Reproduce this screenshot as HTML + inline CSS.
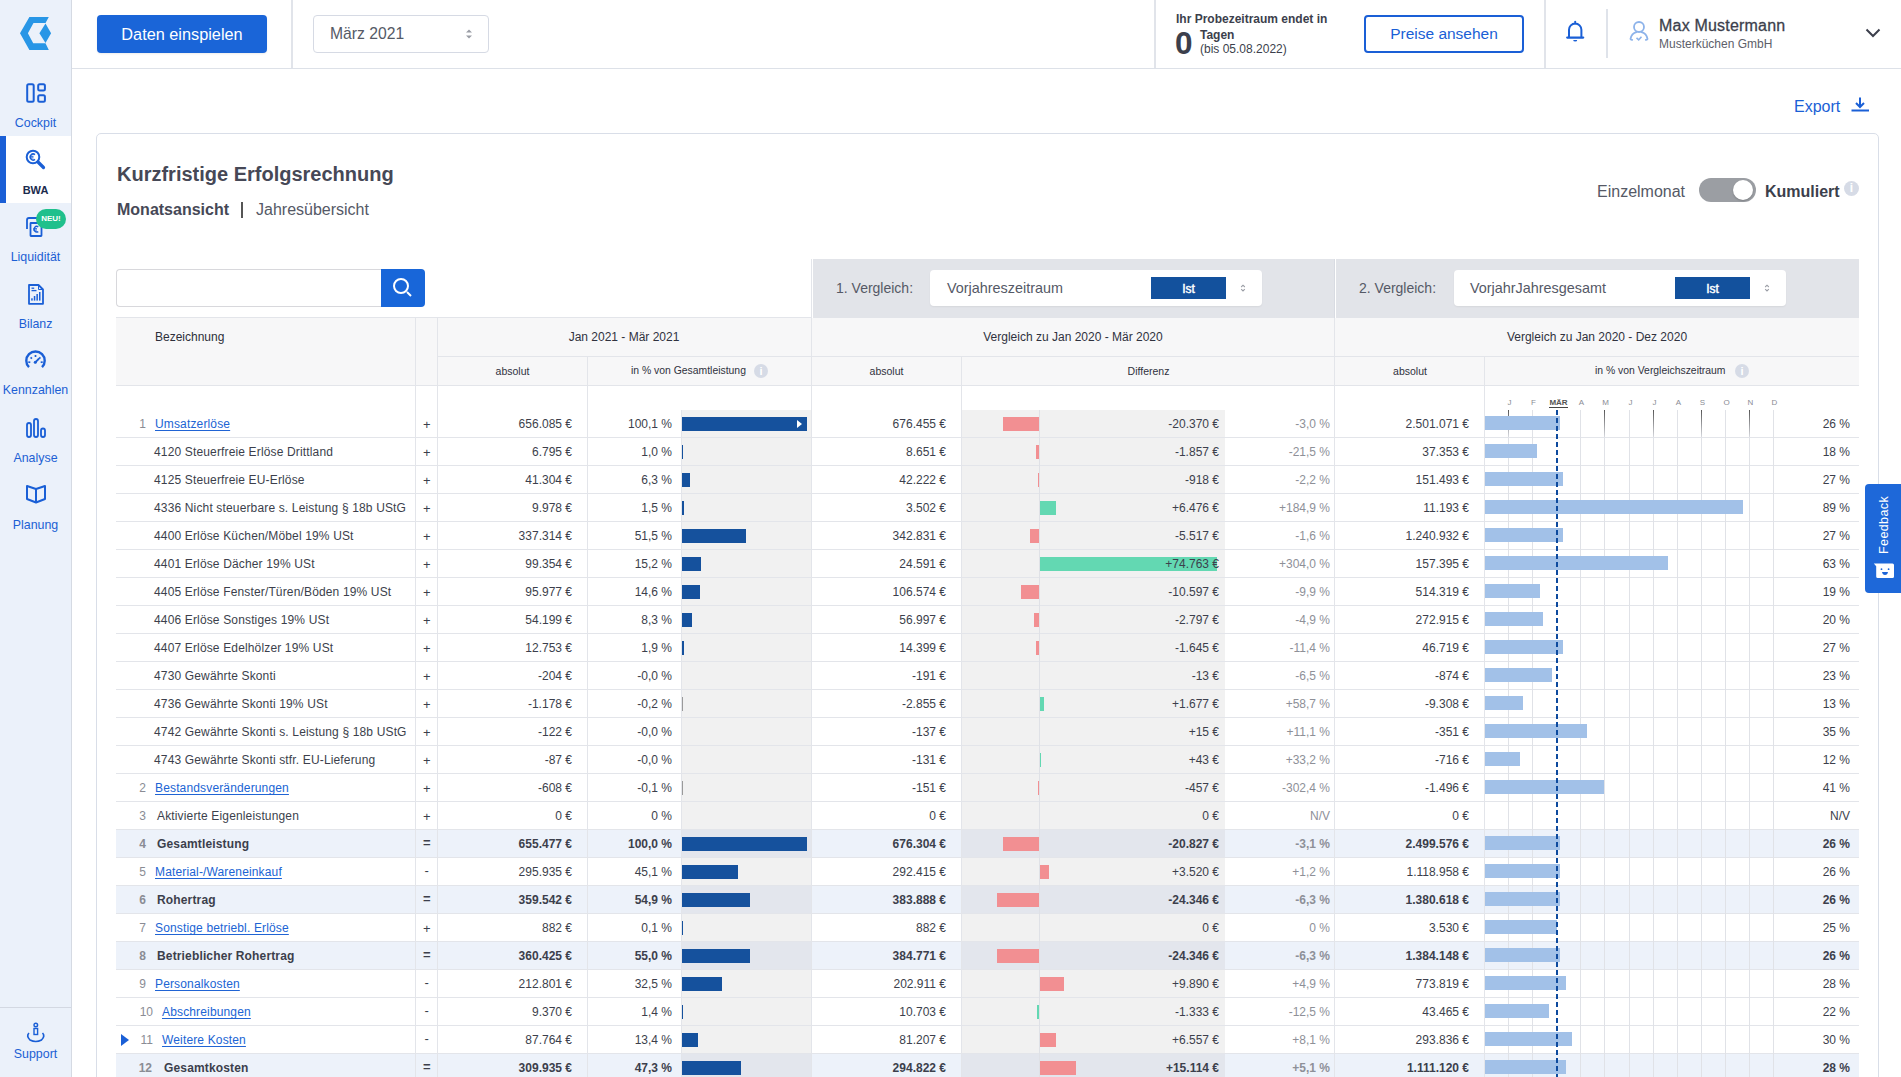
<!DOCTYPE html>
<html><head><meta charset="utf-8">
<style>
*{box-sizing:border-box;margin:0;padding:0}
html,body{width:1901px;height:1077px;overflow:hidden;background:#fff;font-family:"Liberation Sans",sans-serif;color:#3c3f4c}
div{position:absolute}
.a{position:absolute}
.t{position:absolute;height:28px;line-height:29px;font-size:12px;white-space:nowrap;color:#3c3f4c}
.lb{letter-spacing:0.15px}
.r{text-align:right}
.num{text-align:right;color:#8a8c94}
.lnk{color:#2064d4;text-decoration:underline;text-underline-offset:1.5px}
.sg{text-align:center;font-size:13px;line-height:26px !important;padding-left:1.5px}
.dp{color:#8e9098}
.mlab{font-size:8px;text-align:center;color:#8a8c94;height:10px;line-height:10px}
.side{position:absolute;left:0;width:71px;text-align:center;font-size:12.4px;color:#1c5fd4}
.hdr{position:absolute;font-size:12px;color:#30323e;white-space:nowrap}
</style></head><body>
<!-- SIDEBAR -->
<div class="a" style="left:0;top:0;width:72px;height:1077px;background:#ebf1fa;border-right:1px solid #d5dae3"></div>
<svg class="a" style="position:absolute;left:0;top:0" width="71" height="60" viewBox="0 0 71 60">
<polygon fill="#2896e6" points="29.4,17 48.8,17 45.5,22.9 33.5,22.9 27.9,33.3 33.2,43.3 45.5,43.3 48.8,49.9 29.4,49.9 20,33.3"/>
<polygon fill="#2896e6" points="45.5,23.6 51.1,33.3 45.5,43 39.4,33.3"/>
</svg>
<!-- cockpit -->
<svg class="a" style="position:absolute;left:0;top:69px" width="71" height="40" viewBox="0 69 71 40">
<rect x="27.2" y="84.2" width="6.5" height="17.6" rx="1.5" fill="none" stroke="#1a5fd6" stroke-width="2"/>
<rect x="38.2" y="84.2" width="6.7" height="6.4" rx="1.5" fill="none" stroke="#1a5fd6" stroke-width="2"/>
<rect x="38.2" y="95.2" width="6.7" height="6.6" rx="1.5" fill="none" stroke="#1a5fd6" stroke-width="2"/>
</svg>
<div class="side" style="top:116px;height:14px;line-height:14px">Cockpit</div>
<!-- BWA active -->
<div class="a" style="left:0;top:136px;width:71px;height:67px;background:#fff"></div>
<div class="a" style="left:0;top:136px;width:6px;height:67px;background:#1a5fd6"></div>
<svg class="a" style="position:absolute;left:0;top:136px" width="71" height="67" viewBox="0 136 71 67">
<circle cx="33" cy="157" r="6.3" fill="none" stroke="#1a5fd6" stroke-width="2"/>
<path d="M38 162 L43.5 167.5" stroke="#1a5fd6" stroke-width="3.2" stroke-linecap="round"/>
<path d="M35 154.6 A3 3 0 1 0 35 159.4" fill="none" stroke="#1a5fd6" stroke-width="1.5"/>
<path d="M30 156.3 H33.5 M30 157.9 H33.5" stroke="#1a5fd6" stroke-width="1"/>
</svg>
<div class="side" style="top:183px;height:14px;line-height:14px;font-weight:700;font-size:11px;color:#1b2b4d">BWA</div>
<!-- Liquiditaet -->
<svg class="a" style="position:absolute;left:0;top:203px" width="71" height="40" viewBox="0 203 71 40">
<path d="M27 229 V220 Q27 218 29 218 H38" fill="none" stroke="#1a5fd6" stroke-width="1.8"/>
<rect x="30.5" y="223" width="11" height="13" rx="0.5" fill="#edf2fa" stroke="#1a5fd6" stroke-width="1.8"/>
<path d="M38.3 226.8 A2.8 2.8 0 1 0 38.3 231.6" fill="none" stroke="#1a5fd6" stroke-width="1.4"/>
<path d="M33.5 228.6 H37 M33.5 230 H37" stroke="#1a5fd6" stroke-width="0.9"/>
</svg>
<div class="a" style="left:36px;top:209px;width:30px;height:20px;border-radius:10px;background:#1fc08c;color:#fff;font-size:8px;font-weight:700;text-align:center;line-height:20px">NEU!</div>
<div class="side" style="top:250px;height:14px;line-height:14px">Liquidität</div>
<!-- Bilanz -->
<svg class="a" style="position:absolute;left:0;top:270px" width="71" height="40" viewBox="0 270 71 40">
<path d="M29 285 H38.5 L43 289.5 V303.8 H29 Z" fill="none" stroke="#1a5fd6" stroke-width="1.8" stroke-linejoin="round"/>
<path d="M38.5 286 V289.5 H42" fill="none" stroke="#1a5fd6" stroke-width="1"/>
<line x1="31.5" y1="288.2" x2="34.2" y2="288.2" stroke="#1a5fd6" stroke-width="1.3"/>
<line x1="31.5" y1="290.6" x2="36.5" y2="290.6" stroke="#1a5fd6" stroke-width="1.3"/>
<rect x="31.2" y="298.3" width="1.5" height="2.3" fill="#1a5fd6"/><rect x="33.8" y="296" width="1.5" height="4.6" fill="#1a5fd6"/><rect x="36.4" y="294" width="1.5" height="6.6" fill="#1a5fd6"/><rect x="39" y="292" width="1.5" height="8.6" fill="#1a5fd6"/>
</svg>
<div class="side" style="top:317px;height:14px;line-height:14px">Bilanz</div>
<!-- Kennzahlen -->
<svg class="a" style="position:absolute;left:0;top:337px" width="71" height="40" viewBox="0 337 71 40">
<path d="M29 367.2 A9.2 9.2 0 1 1 42 367.2" fill="none" stroke="#1a5fd6" stroke-width="2.4"/>
<line x1="35.5" y1="355" x2="35.5" y2="357" stroke="#1a5fd6" stroke-width="1.7"/>
<line x1="30.6" y1="357.3" x2="31.9" y2="358.6" stroke="#1a5fd6" stroke-width="1.7"/>
<line x1="40.4" y1="357.3" x2="39.1" y2="358.6" stroke="#1a5fd6" stroke-width="1.7"/>
<line x1="28.3" y1="362.2" x2="30.3" y2="362.2" stroke="#1a5fd6" stroke-width="1.7"/>
<line x1="42.7" y1="362.2" x2="40.7" y2="362.2" stroke="#1a5fd6" stroke-width="1.7"/>
<line x1="35.3" y1="362.3" x2="38.6" y2="359" stroke="#1a5fd6" stroke-width="1.8" stroke-linecap="round"/>
<circle cx="35.3" cy="362.3" r="1.5" fill="#1a5fd6"/>
</svg>
<div class="side" style="top:383px;height:14px;line-height:14px">Kennzahlen</div>
<!-- Analyse -->
<svg class="a" style="position:absolute;left:0;top:404px" width="71" height="40" viewBox="0 404 71 40">
<rect x="27" y="423" width="4" height="14" rx="2" fill="none" stroke="#1a5fd6" stroke-width="1.8"/>
<rect x="34" y="419" width="4" height="18" rx="2" fill="none" stroke="#1a5fd6" stroke-width="1.8"/>
<rect x="41" y="428.5" width="4" height="8.5" rx="2" fill="none" stroke="#1a5fd6" stroke-width="1.8"/>
</svg>
<div class="side" style="top:451px;height:14px;line-height:14px">Analyse</div>
<!-- Planung -->
<svg class="a" style="position:absolute;left:0;top:471px" width="71" height="40" viewBox="0 471 71 40">
<path d="M27 486 L36 489 L45 486 V499 L36 502.5 L27 499 Z" fill="none" stroke="#1a5fd6" stroke-width="2" stroke-linejoin="round"/>
<line x1="36" y1="489" x2="36" y2="502" stroke="#1a5fd6" stroke-width="2"/>
</svg>
<div class="side" style="top:518px;height:14px;line-height:14px">Planung</div>
<!-- Support -->
<div class="a" style="left:0;top:1007px;width:71px;height:1px;background:#d3d8e2"></div>
<svg class="a" style="position:absolute;left:0;top:1010px" width="71" height="36" viewBox="0 1010 71 36">
<circle cx="35.8" cy="1025" r="1.8" fill="none" stroke="#1a5fd6" stroke-width="1.4"/>
<rect x="34" y="1028.5" width="3.6" height="6" fill="none" stroke="#1a5fd6" stroke-width="1.4"/>
<path d="M29 1033 Q26 1036 30 1040 Q35.8 1043 41.5 1040 Q45.5 1036 42.5 1033" fill="none" stroke="#1a5fd6" stroke-width="1.6"/>
</svg>
<div class="side" style="top:1047px;height:14px;line-height:14px">Support</div>

<!-- HEADER -->
<div class="a" style="left:72px;top:68px;width:1829px;height:1px;background:#dde1e8"></div>
<div class="a" style="left:97px;top:15px;width:170px;height:38px;background:#1a65d8;border-radius:4px;color:#fff;font-size:16.3px;text-align:center;line-height:39px;box-shadow:0 1px 2px rgba(0,0,0,.08)">Daten einspielen</div>
<div class="a" style="left:291px;top:0;width:2px;height:68px;background:#e1e4ea"></div>
<div class="a" style="left:313px;top:15px;width:176px;height:38px;border:1px solid #d6dae4;border-radius:4px"></div>
<div class="hdr" style="left:330px;top:24px;font-size:15.7px;color:#555a66;line-height:20px">März 2021</div>
<svg class="a" style="position:absolute;left:463px;top:27px" width="12" height="14" viewBox="0 0 12 14"><path d="M3 5.5 L6 2.5 L9 5.5 Z M3 8.5 L6 11.5 L9 8.5 Z" fill="#9a9da5"/></svg>
<div class="a" style="left:1154px;top:0;width:2px;height:68px;background:#e1e4ea"></div>
<div class="hdr" style="left:1176px;top:11.5px;font-weight:700;font-size:12px;line-height:15px;color:#3c3f4c">Ihr Probezeitraum endet in</div>
<div class="hdr" style="left:1175px;top:24.5px;font-weight:700;font-size:31.5px;line-height:36px;color:#3c3f4c">0</div>
<div class="hdr" style="left:1200px;top:28px;font-weight:700;font-size:12px;line-height:15px;color:#3c3f4c">Tagen</div>
<div class="hdr" style="left:1200px;top:41.5px;font-size:12px;line-height:15px;color:#3c3f4c">(bis 05.08.2022)</div>
<div class="a" style="left:1364px;top:15px;width:160px;height:38px;border:2px solid #1a5fd6;border-radius:4px;color:#1a5fd6;font-size:15.5px;text-align:center;line-height:34px">Preise ansehen</div>
<div class="a" style="left:1544px;top:0;width:2px;height:68px;background:#e1e4ea"></div>
<svg class="a" style="position:absolute;left:1563px;top:19px" width="26" height="28" viewBox="0 0 26 28">
<path d="M6 18.5 V10.8 A6.2 6.2 0 0 1 18.4 10.8 V18.5" fill="none" stroke="#1a5fd6" stroke-width="2"/>
<path d="M4.2 18.6 H20.2" stroke="#1a5fd6" stroke-width="2.2" stroke-linecap="round"/>
<path d="M10.2 21 H14.2 A2 1.6 0 0 1 10.2 21 Z" fill="#1a5fd6"/>
<path d="M12.2 2.6 V4.6" stroke="#1a5fd6" stroke-width="1.8" stroke-linecap="round"/>
</svg>
<div class="a" style="left:1606px;top:9px;width:2px;height:49px;background:#dfe3ea"></div>
<svg class="a" style="position:absolute;left:1626px;top:19px" width="26" height="26" viewBox="0 0 26 26">
<circle cx="13" cy="8" r="5" fill="none" stroke="#8db3ea" stroke-width="1.8"/>
<path d="M6.2 20.8 Q4.8 21 4.5 20 Q5.5 14.5 10.5 13.2 M15.5 13.2 Q20.5 14.5 21.5 20 Q21.2 21 19.8 20.8" fill="none" stroke="#8db3ea" stroke-width="1.8" stroke-linecap="round"/>
<path d="M10.5 18.8 l2.2 2 l2.8 -3" fill="none" stroke="#8db3ea" stroke-width="1.6"/>
</svg>
<div class="hdr" style="left:1659px;top:16px;font-size:16px;line-height:20px;color:#3c3f4c;letter-spacing:0.2px;-webkit-text-stroke:0.3px #3c3f4c">Max Mustermann</div>
<div class="hdr" style="left:1659px;top:37px;font-size:12px;line-height:15px;color:#5d6069">Musterküchen GmbH</div>
<svg class="a" style="position:absolute;left:1864px;top:26px" width="18" height="14" viewBox="0 0 18 14"><path d="M2.5 3.5 L9 10 L15.5 3.5" fill="none" stroke="#3c3f4c" stroke-width="2"/></svg>

<!-- EXPORT -->
<div class="hdr" style="left:1794px;top:96.5px;font-size:16px;line-height:20px;color:#1a5fd6">Export</div>
<svg class="a" style="position:absolute;left:1849px;top:95px" width="22" height="18" viewBox="0 0 22 18">
<path d="M11 2.5 v9 M7 8 l4 4 l4 -4" fill="none" stroke="#1a5fd6" stroke-width="2"/>
<path d="M2.5 15.5 h17.5" stroke="#1a5fd6" stroke-width="2"/>
</svg>

<!-- CARD -->
<div class="a" style="left:96px;top:133px;width:1783px;height:1000px;border:1px solid #d9dee8;border-radius:5px"></div>
<div class="hdr" style="left:117px;top:161px;font-size:20px;font-weight:700;line-height:26px;color:#464856">Kurzfristige Erfolgsrechnung</div>
<div class="hdr" style="left:117px;top:200px;font-size:16px;font-weight:700;line-height:20px;color:#464856">Monatsansicht</div>
<div class="a" style="left:241px;top:202px;width:2px;height:16px;background:#555"></div>
<div class="hdr" style="left:256px;top:200px;font-size:16px;line-height:20px;color:#555966">Jahresübersicht</div>

<div class="hdr" style="left:1597px;top:181.5px;font-size:16px;line-height:20px;color:#555966">Einzelmonat</div>
<div class="a" style="left:1699px;top:178px;width:57px;height:24px;border-radius:12px;background:#9b9ea3"></div>
<div class="a" style="left:1733px;top:180px;width:20px;height:20px;border-radius:10px;background:#fff;box-shadow:0 1px 2px rgba(0,0,0,.2)"></div>
<div class="hdr" style="left:1765px;top:181.5px;font-size:16px;font-weight:700;line-height:20px;color:#3c3f4c">Kumuliert</div>
<div class="a" style="left:1844px;top:181px;width:15px;height:15px;border-radius:8px;background:#d6dbe6;color:#fff;font-size:12px;font-weight:700;text-align:center;line-height:15px">i</div>

<!-- SEARCH -->
<div class="a" style="left:116px;top:269px;width:266px;height:38px;border:1px solid #d8d8dc;border-right:none;border-radius:4px 0 0 4px"></div>
<div class="a" style="left:381px;top:269px;width:44px;height:38px;background:#1866d9;border-radius:0 4px 4px 0"></div>
<svg class="a" style="position:absolute;left:381px;top:269px" width="44" height="38" viewBox="0 0 44 38">
<circle cx="20" cy="17" r="7" fill="none" stroke="#fff" stroke-width="2"/>
<line x1="26" y1="23" x2="30" y2="27" stroke="#fff" stroke-width="2"/>
</svg>

<!-- VERGLEICH PANELS -->
<div class="a" style="left:813px;top:259px;width:522px;height:59px;background:#e2e4e9"></div>
<div class="a" style="left:1336px;top:259px;width:523px;height:59px;background:#e2e4e9"></div>
<div class="a" style="left:811px;top:259px;width:1px;height:59px;background:#e3e5ea"></div>
<div class="a" style="left:1334px;top:259px;width:1px;height:59px;background:#d8dbe2"></div>
<div class="hdr" style="left:836px;top:278px;font-size:14px;line-height:20px;color:#555966">1. Vergleich:</div>
<div class="a" style="left:930px;top:270px;width:332px;height:36px;background:#fff;border-radius:4px;box-shadow:0 1px 2px rgba(0,0,0,.06)"></div>
<div class="hdr" style="left:947px;top:278px;font-size:14.4px;line-height:20px;color:#555966">Vorjahreszeitraum</div>
<div class="a" style="left:1151px;top:277px;width:75px;height:22px;background:#13519d;color:#fff;font-size:12px;font-weight:400;-webkit-text-stroke:0.45px #fff;text-align:center;line-height:24px">Ist</div>
<svg class="a" style="position:absolute;left:1238px;top:281px" width="10" height="14" viewBox="0 0 10 14"><path d="M3.2 6 L5 4.2 L6.8 6 M3.2 8.2 L5 10 L6.8 8.2" fill="none" stroke="#9a9da5" stroke-width="1.1"/></svg>
<div class="hdr" style="left:1359px;top:278px;font-size:14px;line-height:20px;color:#555966">2. Vergleich:</div>
<div class="a" style="left:1454px;top:270px;width:332px;height:36px;background:#fff;border-radius:4px;box-shadow:0 1px 2px rgba(0,0,0,.06)"></div>
<div class="hdr" style="left:1470px;top:278px;font-size:14.4px;line-height:20px;color:#555966">VorjahrJahresgesamt</div>
<div class="a" style="left:1675px;top:277px;width:75px;height:22px;background:#13519d;color:#fff;font-size:12px;font-weight:400;-webkit-text-stroke:0.45px #fff;text-align:center;line-height:24px">Ist</div>
<svg class="a" style="position:absolute;left:1762px;top:281px" width="10" height="14" viewBox="0 0 10 14"><path d="M3.2 6 L5 4.2 L6.8 6 M3.2 8.2 L5 10 L6.8 8.2" fill="none" stroke="#9a9da5" stroke-width="1.1"/></svg>

<!-- TABLE HEADER -->
<div class="a" style="left:116px;top:318px;width:1743px;height:68px;background:#f7f7f8"></div>
<div class="a" style="left:116px;top:317px;width:695px;height:1px;background:#e3e5ea"></div>
<div class="a" style="left:437px;top:356px;width:1422px;height:1px;background:#e3e5ea"></div>
<div class="a" style="left:116px;top:385px;width:1743px;height:1px;background:#e3e5ea"></div>
<div class="hdr" style="left:155px;top:329px;line-height:16px;color:#2d2f3a">Bezeichnung</div>
<div class="hdr" style="left:437px;top:329px;width:374px;text-align:center;line-height:16px">Jan 2021 - Mär 2021</div>
<div class="hdr" style="left:811px;top:329px;width:524px;text-align:center;line-height:16px">Vergleich zu Jan 2020 - Mär 2020</div>
<div class="hdr" style="left:1335px;top:329px;width:524px;text-align:center;line-height:16px">Vergleich zu Jan 2020 - Dez 2020</div>
<div class="hdr" style="left:437px;top:364px;width:151px;text-align:center;line-height:14px;font-size:10.5px">absolut</div>
<div class="hdr" style="left:631px;top:364px;line-height:14px;font-size:10.4px">in % von Gesamtleistung</div>
<div class="a" style="left:754px;top:364px;width:14px;height:14px;border-radius:7px;background:#d6dbe6;color:#fff;font-size:11px;font-weight:700;text-align:center;line-height:14px">i</div>
<div class="hdr" style="left:811px;top:364px;width:151px;text-align:center;line-height:14px;font-size:10.5px">absolut</div>
<div class="hdr" style="left:962px;top:364px;width:373px;text-align:center;line-height:14px;font-size:10.5px">Differenz</div>
<div class="hdr" style="left:1335px;top:364px;width:150px;text-align:center;line-height:14px;font-size:10.5px">absolut</div>
<div class="hdr" style="left:1595px;top:364px;line-height:14px;font-size:10.4px">in % von Vergleichszeitraum</div>
<div class="a" style="left:1735px;top:364px;width:14px;height:14px;border-radius:7px;background:#d6dbe6;color:#fff;font-size:11px;font-weight:700;text-align:center;line-height:14px">i</div>

<!-- TABLE BODY -->
<div class="a" style="left:681px;top:410px;width:130px;height:28px;background:#f1f1f1"></div>
<div class="a" style="left:962px;top:410px;width:263px;height:28px;background:#f1f1f1"></div>
<div class="a" style="left:116px;top:437px;width:1743px;height:1px;background:#e3e5ea"></div>
<div class="a" style="left:1039px;top:410px;width:1px;height:28px;background:#dfe1e6"></div>
<div class="a" style="left:681px;top:438px;width:130px;height:28px;background:#f1f1f1"></div>
<div class="a" style="left:962px;top:438px;width:263px;height:28px;background:#f1f1f1"></div>
<div class="a" style="left:116px;top:465px;width:1743px;height:1px;background:#e3e5ea"></div>
<div class="a" style="left:1039px;top:438px;width:1px;height:28px;background:#dfe1e6"></div>
<div class="a" style="left:681px;top:466px;width:130px;height:28px;background:#f1f1f1"></div>
<div class="a" style="left:962px;top:466px;width:263px;height:28px;background:#f1f1f1"></div>
<div class="a" style="left:116px;top:493px;width:1743px;height:1px;background:#e3e5ea"></div>
<div class="a" style="left:1039px;top:466px;width:1px;height:28px;background:#dfe1e6"></div>
<div class="a" style="left:681px;top:494px;width:130px;height:28px;background:#f1f1f1"></div>
<div class="a" style="left:962px;top:494px;width:263px;height:28px;background:#f1f1f1"></div>
<div class="a" style="left:116px;top:521px;width:1743px;height:1px;background:#e3e5ea"></div>
<div class="a" style="left:1039px;top:494px;width:1px;height:28px;background:#dfe1e6"></div>
<div class="a" style="left:681px;top:522px;width:130px;height:28px;background:#f1f1f1"></div>
<div class="a" style="left:962px;top:522px;width:263px;height:28px;background:#f1f1f1"></div>
<div class="a" style="left:116px;top:549px;width:1743px;height:1px;background:#e3e5ea"></div>
<div class="a" style="left:1039px;top:522px;width:1px;height:28px;background:#dfe1e6"></div>
<div class="a" style="left:681px;top:550px;width:130px;height:28px;background:#f1f1f1"></div>
<div class="a" style="left:962px;top:550px;width:263px;height:28px;background:#f1f1f1"></div>
<div class="a" style="left:116px;top:577px;width:1743px;height:1px;background:#e3e5ea"></div>
<div class="a" style="left:1039px;top:550px;width:1px;height:28px;background:#dfe1e6"></div>
<div class="a" style="left:681px;top:578px;width:130px;height:28px;background:#f1f1f1"></div>
<div class="a" style="left:962px;top:578px;width:263px;height:28px;background:#f1f1f1"></div>
<div class="a" style="left:116px;top:605px;width:1743px;height:1px;background:#e3e5ea"></div>
<div class="a" style="left:1039px;top:578px;width:1px;height:28px;background:#dfe1e6"></div>
<div class="a" style="left:681px;top:606px;width:130px;height:28px;background:#f1f1f1"></div>
<div class="a" style="left:962px;top:606px;width:263px;height:28px;background:#f1f1f1"></div>
<div class="a" style="left:116px;top:633px;width:1743px;height:1px;background:#e3e5ea"></div>
<div class="a" style="left:1039px;top:606px;width:1px;height:28px;background:#dfe1e6"></div>
<div class="a" style="left:681px;top:634px;width:130px;height:28px;background:#f1f1f1"></div>
<div class="a" style="left:962px;top:634px;width:263px;height:28px;background:#f1f1f1"></div>
<div class="a" style="left:116px;top:661px;width:1743px;height:1px;background:#e3e5ea"></div>
<div class="a" style="left:1039px;top:634px;width:1px;height:28px;background:#dfe1e6"></div>
<div class="a" style="left:681px;top:662px;width:130px;height:28px;background:#f1f1f1"></div>
<div class="a" style="left:962px;top:662px;width:263px;height:28px;background:#f1f1f1"></div>
<div class="a" style="left:116px;top:689px;width:1743px;height:1px;background:#e3e5ea"></div>
<div class="a" style="left:1039px;top:662px;width:1px;height:28px;background:#dfe1e6"></div>
<div class="a" style="left:681px;top:690px;width:130px;height:28px;background:#f1f1f1"></div>
<div class="a" style="left:962px;top:690px;width:263px;height:28px;background:#f1f1f1"></div>
<div class="a" style="left:116px;top:717px;width:1743px;height:1px;background:#e3e5ea"></div>
<div class="a" style="left:1039px;top:690px;width:1px;height:28px;background:#dfe1e6"></div>
<div class="a" style="left:681px;top:718px;width:130px;height:28px;background:#f1f1f1"></div>
<div class="a" style="left:962px;top:718px;width:263px;height:28px;background:#f1f1f1"></div>
<div class="a" style="left:116px;top:745px;width:1743px;height:1px;background:#e3e5ea"></div>
<div class="a" style="left:1039px;top:718px;width:1px;height:28px;background:#dfe1e6"></div>
<div class="a" style="left:681px;top:746px;width:130px;height:28px;background:#f1f1f1"></div>
<div class="a" style="left:962px;top:746px;width:263px;height:28px;background:#f1f1f1"></div>
<div class="a" style="left:116px;top:773px;width:1743px;height:1px;background:#e3e5ea"></div>
<div class="a" style="left:1039px;top:746px;width:1px;height:28px;background:#dfe1e6"></div>
<div class="a" style="left:681px;top:774px;width:130px;height:28px;background:#f1f1f1"></div>
<div class="a" style="left:962px;top:774px;width:263px;height:28px;background:#f1f1f1"></div>
<div class="a" style="left:116px;top:801px;width:1743px;height:1px;background:#e3e5ea"></div>
<div class="a" style="left:1039px;top:774px;width:1px;height:28px;background:#dfe1e6"></div>
<div class="a" style="left:681px;top:802px;width:130px;height:28px;background:#f1f1f1"></div>
<div class="a" style="left:962px;top:802px;width:263px;height:28px;background:#f1f1f1"></div>
<div class="a" style="left:116px;top:829px;width:1743px;height:1px;background:#e3e5ea"></div>
<div class="a" style="left:1039px;top:802px;width:1px;height:28px;background:#dfe1e6"></div>
<div class="a" style="left:116px;top:830px;width:1743px;height:28px;background:#edf2fa"></div>
<div class="a" style="left:681px;top:830px;width:130px;height:28px;background:#e3e6ed"></div>
<div class="a" style="left:962px;top:830px;width:263px;height:28px;background:#e3e6ed"></div>
<div class="a" style="left:116px;top:857px;width:1743px;height:1px;background:#e3e5ea"></div>
<div class="a" style="left:1039px;top:830px;width:1px;height:28px;background:#dfe1e6"></div>
<div class="a" style="left:681px;top:858px;width:130px;height:28px;background:#f1f1f1"></div>
<div class="a" style="left:962px;top:858px;width:263px;height:28px;background:#f1f1f1"></div>
<div class="a" style="left:116px;top:885px;width:1743px;height:1px;background:#e3e5ea"></div>
<div class="a" style="left:1039px;top:858px;width:1px;height:28px;background:#dfe1e6"></div>
<div class="a" style="left:116px;top:886px;width:1743px;height:28px;background:#edf2fa"></div>
<div class="a" style="left:681px;top:886px;width:130px;height:28px;background:#e3e6ed"></div>
<div class="a" style="left:962px;top:886px;width:263px;height:28px;background:#e3e6ed"></div>
<div class="a" style="left:116px;top:913px;width:1743px;height:1px;background:#e3e5ea"></div>
<div class="a" style="left:1039px;top:886px;width:1px;height:28px;background:#dfe1e6"></div>
<div class="a" style="left:681px;top:914px;width:130px;height:28px;background:#f1f1f1"></div>
<div class="a" style="left:962px;top:914px;width:263px;height:28px;background:#f1f1f1"></div>
<div class="a" style="left:116px;top:941px;width:1743px;height:1px;background:#e3e5ea"></div>
<div class="a" style="left:1039px;top:914px;width:1px;height:28px;background:#dfe1e6"></div>
<div class="a" style="left:116px;top:942px;width:1743px;height:28px;background:#edf2fa"></div>
<div class="a" style="left:681px;top:942px;width:130px;height:28px;background:#e3e6ed"></div>
<div class="a" style="left:962px;top:942px;width:263px;height:28px;background:#e3e6ed"></div>
<div class="a" style="left:116px;top:969px;width:1743px;height:1px;background:#e3e5ea"></div>
<div class="a" style="left:1039px;top:942px;width:1px;height:28px;background:#dfe1e6"></div>
<div class="a" style="left:681px;top:970px;width:130px;height:28px;background:#f1f1f1"></div>
<div class="a" style="left:962px;top:970px;width:263px;height:28px;background:#f1f1f1"></div>
<div class="a" style="left:116px;top:997px;width:1743px;height:1px;background:#e3e5ea"></div>
<div class="a" style="left:1039px;top:970px;width:1px;height:28px;background:#dfe1e6"></div>
<div class="a" style="left:681px;top:998px;width:130px;height:28px;background:#f1f1f1"></div>
<div class="a" style="left:962px;top:998px;width:263px;height:28px;background:#f1f1f1"></div>
<div class="a" style="left:116px;top:1025px;width:1743px;height:1px;background:#e3e5ea"></div>
<div class="a" style="left:1039px;top:998px;width:1px;height:28px;background:#dfe1e6"></div>
<div class="a" style="left:681px;top:1026px;width:130px;height:28px;background:#f1f1f1"></div>
<div class="a" style="left:962px;top:1026px;width:263px;height:28px;background:#f1f1f1"></div>
<div class="a" style="left:116px;top:1053px;width:1743px;height:1px;background:#e3e5ea"></div>
<div class="a" style="left:1039px;top:1026px;width:1px;height:28px;background:#dfe1e6"></div>
<div class="a" style="left:116px;top:1054px;width:1743px;height:28px;background:#edf2fa"></div>
<div class="a" style="left:681px;top:1054px;width:130px;height:28px;background:#e3e6ed"></div>
<div class="a" style="left:962px;top:1054px;width:263px;height:28px;background:#e3e6ed"></div>
<div class="a" style="left:116px;top:1081px;width:1743px;height:1px;background:#e3e5ea"></div>
<div class="a" style="left:1039px;top:1054px;width:1px;height:28px;background:#dfe1e6"></div>
<div class="a" style="left:1508px;top:410px;width:1px;height:672px;background:#e0e2e7"></div>
<div class="a" style="left:1508px;top:410px;width:1px;height:27px;background:linear-gradient(#555,#d8dae0)"></div>
<div class="a" style="left:1532px;top:410px;width:1px;height:672px;background:#e0e2e7"></div>
<div class="a" style="left:1580px;top:410px;width:1px;height:672px;background:#e0e2e7"></div>
<div class="a" style="left:1604px;top:410px;width:1px;height:672px;background:#e0e2e7"></div>
<div class="a" style="left:1604px;top:410px;width:1px;height:27px;background:linear-gradient(#555,#d8dae0)"></div>
<div class="a" style="left:1629px;top:410px;width:1px;height:672px;background:#e0e2e7"></div>
<div class="a" style="left:1653px;top:410px;width:1px;height:672px;background:#e0e2e7"></div>
<div class="a" style="left:1653px;top:410px;width:1px;height:27px;background:linear-gradient(#555,#d8dae0)"></div>
<div class="a" style="left:1677px;top:410px;width:1px;height:672px;background:#e0e2e7"></div>
<div class="a" style="left:1701px;top:410px;width:1px;height:672px;background:#e0e2e7"></div>
<div class="a" style="left:1701px;top:410px;width:1px;height:27px;background:linear-gradient(#555,#d8dae0)"></div>
<div class="a" style="left:1725px;top:410px;width:1px;height:672px;background:#e0e2e7"></div>
<div class="a" style="left:1749px;top:410px;width:1px;height:672px;background:#e0e2e7"></div>
<div class="a" style="left:1749px;top:410px;width:1px;height:27px;background:linear-gradient(#555,#d8dae0)"></div>
<div class="a" style="left:1773px;top:410px;width:1px;height:672px;background:#e0e2e7"></div>
<div class="a mlab" style="left:1489.5px;top:398px;width:40px">J</div>
<div class="a mlab" style="left:1513.5px;top:398px;width:40px">F</div>
<div class="a mlab" style="left:1538.5px;top:398px;width:40px;font-weight:700;"><span style="border-bottom:1px solid #444;color:#555;display:inline-block;line-height:9px">MÄR</span></div>
<div class="a mlab" style="left:1561.5px;top:398px;width:40px">A</div>
<div class="a mlab" style="left:1585.5px;top:398px;width:40px">M</div>
<div class="a mlab" style="left:1610.5px;top:398px;width:40px">J</div>
<div class="a mlab" style="left:1634.5px;top:398px;width:40px">J</div>
<div class="a mlab" style="left:1658.5px;top:398px;width:40px">A</div>
<div class="a mlab" style="left:1682.5px;top:398px;width:40px">S</div>
<div class="a mlab" style="left:1706.5px;top:398px;width:40px">O</div>
<div class="a mlab" style="left:1730.5px;top:398px;width:40px">N</div>
<div class="a mlab" style="left:1754.5px;top:398px;width:40px">D</div>
<div class="t num" style="left:106px;top:410px;width:40px;">1</div>
<div class="t lb lnk" style="left:155px;top:410px;">Umsatzerlöse</div>
<div class="t sg" style="left:415px;top:412px;width:22px;">+</div>
<div class="t r" style="left:437px;top:410px;width:135px;">656.085 €</div>
<div class="t r" style="left:588px;top:410px;width:84px;">100,1 %</div>
<div class="a" style="left:682px;top:417px;width:125px;height:14px;background:#15519d"></div>
<div class="a" style="left:797px;top:420px;width:0;height:0;border-left:5px solid #fff;border-top:4px solid transparent;border-bottom:4px solid transparent"></div>
<div class="t r" style="left:811px;top:410px;width:135px;">676.455 €</div>
<div class="a" style="left:1003px;top:417px;width:36px;height:14px;background:#f28f92"></div>
<div class="t r" style="left:962px;top:410px;width:257px;">-20.370 €</div>
<div class="t r dp" style="left:1225px;top:410px;width:105px;">-3,0 %</div>
<div class="t r" style="left:1335px;top:410px;width:134px;">2.501.071 €</div>
<div class="a" style="left:1485px;top:416px;width:75px;height:14px;background:#a2c1e8"></div>
<div class="t r" style="left:1760px;top:410px;width:90px;">26 %</div>
<div class="t lb " style="left:154px;top:438px;">4120 Steuerfreie Erlöse Drittland</div>
<div class="t sg" style="left:415px;top:440px;width:22px;">+</div>
<div class="t r" style="left:437px;top:438px;width:135px;">6.795 €</div>
<div class="t r" style="left:588px;top:438px;width:84px;">1,0 %</div>
<div class="a" style="left:682px;top:445px;width:1px;height:14px;background:#15519d"></div>
<div class="t r" style="left:811px;top:438px;width:135px;">8.651 €</div>
<div class="a" style="left:1036px;top:445px;width:3px;height:14px;background:#f28f92"></div>
<div class="t r" style="left:962px;top:438px;width:257px;">-1.857 €</div>
<div class="t r dp" style="left:1225px;top:438px;width:105px;">-21,5 %</div>
<div class="t r" style="left:1335px;top:438px;width:134px;">37.353 €</div>
<div class="a" style="left:1485px;top:444px;width:52px;height:14px;background:#a2c1e8"></div>
<div class="t r" style="left:1760px;top:438px;width:90px;">18 %</div>
<div class="t lb " style="left:154px;top:466px;">4125 Steuerfreie EU-Erlöse</div>
<div class="t sg" style="left:415px;top:468px;width:22px;">+</div>
<div class="t r" style="left:437px;top:466px;width:135px;">41.304 €</div>
<div class="t r" style="left:588px;top:466px;width:84px;">6,3 %</div>
<div class="a" style="left:682px;top:473px;width:8px;height:14px;background:#15519d"></div>
<div class="t r" style="left:811px;top:466px;width:135px;">42.222 €</div>
<div class="a" style="left:1038px;top:473px;width:1px;height:14px;background:#f28f92"></div>
<div class="t r" style="left:962px;top:466px;width:257px;">-918 €</div>
<div class="t r dp" style="left:1225px;top:466px;width:105px;">-2,2 %</div>
<div class="t r" style="left:1335px;top:466px;width:134px;">151.493 €</div>
<div class="a" style="left:1485px;top:472px;width:78px;height:14px;background:#a2c1e8"></div>
<div class="t r" style="left:1760px;top:466px;width:90px;">27 %</div>
<div class="t lb " style="left:154px;top:494px;">4336 Nicht steuerbare s. Leistung § 18b UStG</div>
<div class="t sg" style="left:415px;top:496px;width:22px;">+</div>
<div class="t r" style="left:437px;top:494px;width:135px;">9.978 €</div>
<div class="t r" style="left:588px;top:494px;width:84px;">1,5 %</div>
<div class="a" style="left:682px;top:501px;width:2px;height:14px;background:#15519d"></div>
<div class="t r" style="left:811px;top:494px;width:135px;">3.502 €</div>
<div class="a" style="left:1040px;top:501px;width:16px;height:14px;background:#63d8b2"></div>
<div class="t r" style="left:962px;top:494px;width:257px;">+6.476 €</div>
<div class="t r dp" style="left:1225px;top:494px;width:105px;">+184,9 %</div>
<div class="t r" style="left:1335px;top:494px;width:134px;">11.193 €</div>
<div class="a" style="left:1485px;top:500px;width:258px;height:14px;background:#a2c1e8"></div>
<div class="t r" style="left:1760px;top:494px;width:90px;">89 %</div>
<div class="t lb " style="left:154px;top:522px;">4400 Erlöse Küchen/Möbel 19% USt</div>
<div class="t sg" style="left:415px;top:524px;width:22px;">+</div>
<div class="t r" style="left:437px;top:522px;width:135px;">337.314 €</div>
<div class="t r" style="left:588px;top:522px;width:84px;">51,5 %</div>
<div class="a" style="left:682px;top:529px;width:64px;height:14px;background:#15519d"></div>
<div class="t r" style="left:811px;top:522px;width:135px;">342.831 €</div>
<div class="a" style="left:1030px;top:529px;width:9px;height:14px;background:#f28f92"></div>
<div class="t r" style="left:962px;top:522px;width:257px;">-5.517 €</div>
<div class="t r dp" style="left:1225px;top:522px;width:105px;">-1,6 %</div>
<div class="t r" style="left:1335px;top:522px;width:134px;">1.240.932 €</div>
<div class="a" style="left:1485px;top:528px;width:78px;height:14px;background:#a2c1e8"></div>
<div class="t r" style="left:1760px;top:522px;width:90px;">27 %</div>
<div class="t lb " style="left:154px;top:550px;">4401 Erlöse Dächer 19% USt</div>
<div class="t sg" style="left:415px;top:552px;width:22px;">+</div>
<div class="t r" style="left:437px;top:550px;width:135px;">99.354 €</div>
<div class="t r" style="left:588px;top:550px;width:84px;">15,2 %</div>
<div class="a" style="left:682px;top:557px;width:19px;height:14px;background:#15519d"></div>
<div class="t r" style="left:811px;top:550px;width:135px;">24.591 €</div>
<div class="a" style="left:1040px;top:557px;width:177px;height:14px;background:#63d8b2"></div>
<div class="t r" style="left:962px;top:550px;width:257px;">+74.763 €</div>
<div class="t r dp" style="left:1225px;top:550px;width:105px;">+304,0 %</div>
<div class="t r" style="left:1335px;top:550px;width:134px;">157.395 €</div>
<div class="a" style="left:1485px;top:556px;width:183px;height:14px;background:#a2c1e8"></div>
<div class="t r" style="left:1760px;top:550px;width:90px;">63 %</div>
<div class="t lb " style="left:154px;top:578px;">4405 Erlöse Fenster/Türen/Böden 19% USt</div>
<div class="t sg" style="left:415px;top:580px;width:22px;">+</div>
<div class="t r" style="left:437px;top:578px;width:135px;">95.977 €</div>
<div class="t r" style="left:588px;top:578px;width:84px;">14,6 %</div>
<div class="a" style="left:682px;top:585px;width:18px;height:14px;background:#15519d"></div>
<div class="t r" style="left:811px;top:578px;width:135px;">106.574 €</div>
<div class="a" style="left:1021px;top:585px;width:18px;height:14px;background:#f28f92"></div>
<div class="t r" style="left:962px;top:578px;width:257px;">-10.597 €</div>
<div class="t r dp" style="left:1225px;top:578px;width:105px;">-9,9 %</div>
<div class="t r" style="left:1335px;top:578px;width:134px;">514.319 €</div>
<div class="a" style="left:1485px;top:584px;width:55px;height:14px;background:#a2c1e8"></div>
<div class="t r" style="left:1760px;top:578px;width:90px;">19 %</div>
<div class="t lb " style="left:154px;top:606px;">4406 Erlöse Sonstiges 19% USt</div>
<div class="t sg" style="left:415px;top:608px;width:22px;">+</div>
<div class="t r" style="left:437px;top:606px;width:135px;">54.199 €</div>
<div class="t r" style="left:588px;top:606px;width:84px;">8,3 %</div>
<div class="a" style="left:682px;top:613px;width:10px;height:14px;background:#15519d"></div>
<div class="t r" style="left:811px;top:606px;width:135px;">56.997 €</div>
<div class="a" style="left:1034px;top:613px;width:5px;height:14px;background:#f28f92"></div>
<div class="t r" style="left:962px;top:606px;width:257px;">-2.797 €</div>
<div class="t r dp" style="left:1225px;top:606px;width:105px;">-4,9 %</div>
<div class="t r" style="left:1335px;top:606px;width:134px;">272.915 €</div>
<div class="a" style="left:1485px;top:612px;width:58px;height:14px;background:#a2c1e8"></div>
<div class="t r" style="left:1760px;top:606px;width:90px;">20 %</div>
<div class="t lb " style="left:154px;top:634px;">4407 Erlöse Edelhölzer 19% USt</div>
<div class="t sg" style="left:415px;top:636px;width:22px;">+</div>
<div class="t r" style="left:437px;top:634px;width:135px;">12.753 €</div>
<div class="t r" style="left:588px;top:634px;width:84px;">1,9 %</div>
<div class="a" style="left:682px;top:641px;width:2px;height:14px;background:#15519d"></div>
<div class="t r" style="left:811px;top:634px;width:135px;">14.399 €</div>
<div class="a" style="left:1036px;top:641px;width:3px;height:14px;background:#f28f92"></div>
<div class="t r" style="left:962px;top:634px;width:257px;">-1.645 €</div>
<div class="t r dp" style="left:1225px;top:634px;width:105px;">-11,4 %</div>
<div class="t r" style="left:1335px;top:634px;width:134px;">46.719 €</div>
<div class="a" style="left:1485px;top:640px;width:78px;height:14px;background:#a2c1e8"></div>
<div class="t r" style="left:1760px;top:634px;width:90px;">27 %</div>
<div class="t lb " style="left:154px;top:662px;">4730 Gewährte Skonti</div>
<div class="t sg" style="left:415px;top:664px;width:22px;">+</div>
<div class="t r" style="left:437px;top:662px;width:135px;">-204 €</div>
<div class="t r" style="left:588px;top:662px;width:84px;">-0,0 %</div>
<div class="t r" style="left:811px;top:662px;width:135px;">-191 €</div>
<div class="t r" style="left:962px;top:662px;width:257px;">-13 €</div>
<div class="t r dp" style="left:1225px;top:662px;width:105px;">-6,5 %</div>
<div class="t r" style="left:1335px;top:662px;width:134px;">-874 €</div>
<div class="a" style="left:1485px;top:668px;width:67px;height:14px;background:#a2c1e8"></div>
<div class="t r" style="left:1760px;top:662px;width:90px;">23 %</div>
<div class="t lb " style="left:154px;top:690px;">4736 Gewährte Skonti 19% USt</div>
<div class="t sg" style="left:415px;top:692px;width:22px;">+</div>
<div class="t r" style="left:437px;top:690px;width:135px;">-1.178 €</div>
<div class="t r" style="left:588px;top:690px;width:84px;">-0,2 %</div>
<div class="a" style="left:682px;top:697px;width:1px;height:14px;background:#9a9a9a"></div>
<div class="t r" style="left:811px;top:690px;width:135px;">-2.855 €</div>
<div class="a" style="left:1040px;top:697px;width:4px;height:14px;background:#63d8b2"></div>
<div class="t r" style="left:962px;top:690px;width:257px;">+1.677 €</div>
<div class="t r dp" style="left:1225px;top:690px;width:105px;">+58,7 %</div>
<div class="t r" style="left:1335px;top:690px;width:134px;">-9.308 €</div>
<div class="a" style="left:1485px;top:696px;width:38px;height:14px;background:#a2c1e8"></div>
<div class="t r" style="left:1760px;top:690px;width:90px;">13 %</div>
<div class="t lb " style="left:154px;top:718px;">4742 Gewährte Skonti s. Leistung § 18b UStG</div>
<div class="t sg" style="left:415px;top:720px;width:22px;">+</div>
<div class="t r" style="left:437px;top:718px;width:135px;">-122 €</div>
<div class="t r" style="left:588px;top:718px;width:84px;">-0,0 %</div>
<div class="t r" style="left:811px;top:718px;width:135px;">-137 €</div>
<div class="t r" style="left:962px;top:718px;width:257px;">+15 €</div>
<div class="t r dp" style="left:1225px;top:718px;width:105px;">+11,1 %</div>
<div class="t r" style="left:1335px;top:718px;width:134px;">-351 €</div>
<div class="a" style="left:1485px;top:724px;width:102px;height:14px;background:#a2c1e8"></div>
<div class="t r" style="left:1760px;top:718px;width:90px;">35 %</div>
<div class="t lb " style="left:154px;top:746px;">4743 Gewährte Skonti stfr. EU-Lieferung</div>
<div class="t sg" style="left:415px;top:748px;width:22px;">+</div>
<div class="t r" style="left:437px;top:746px;width:135px;">-87 €</div>
<div class="t r" style="left:588px;top:746px;width:84px;">-0,0 %</div>
<div class="t r" style="left:811px;top:746px;width:135px;">-131 €</div>
<div class="a" style="left:1040px;top:753px;width:1px;height:14px;background:#63d8b2"></div>
<div class="t r" style="left:962px;top:746px;width:257px;">+43 €</div>
<div class="t r dp" style="left:1225px;top:746px;width:105px;">+33,2 %</div>
<div class="t r" style="left:1335px;top:746px;width:134px;">-716 €</div>
<div class="a" style="left:1485px;top:752px;width:35px;height:14px;background:#a2c1e8"></div>
<div class="t r" style="left:1760px;top:746px;width:90px;">12 %</div>
<div class="t num" style="left:106px;top:774px;width:40px;">2</div>
<div class="t lb lnk" style="left:155px;top:774px;">Bestandsveränderungen</div>
<div class="t sg" style="left:415px;top:776px;width:22px;">+</div>
<div class="t r" style="left:437px;top:774px;width:135px;">-608 €</div>
<div class="t r" style="left:588px;top:774px;width:84px;">-0,1 %</div>
<div class="a" style="left:682px;top:781px;width:1px;height:14px;background:#9a9a9a"></div>
<div class="t r" style="left:811px;top:774px;width:135px;">-151 €</div>
<div class="a" style="left:1038px;top:781px;width:1px;height:14px;background:#f28f92"></div>
<div class="t r" style="left:962px;top:774px;width:257px;">-457 €</div>
<div class="t r dp" style="left:1225px;top:774px;width:105px;">-302,4 %</div>
<div class="t r" style="left:1335px;top:774px;width:134px;">-1.496 €</div>
<div class="a" style="left:1485px;top:780px;width:119px;height:14px;background:#a2c1e8"></div>
<div class="t r" style="left:1760px;top:774px;width:90px;">41 %</div>
<div class="t num" style="left:106px;top:802px;width:40px;">3</div>
<div class="t lb " style="left:157px;top:802px;">Aktivierte Eigenleistungen</div>
<div class="t sg" style="left:415px;top:804px;width:22px;">+</div>
<div class="t r" style="left:437px;top:802px;width:135px;">0 €</div>
<div class="t r" style="left:588px;top:802px;width:84px;">0 %</div>
<div class="t r" style="left:811px;top:802px;width:135px;">0 €</div>
<div class="t r" style="left:962px;top:802px;width:257px;">0 €</div>
<div class="t r dp" style="left:1225px;top:802px;width:105px;">N/V</div>
<div class="t r" style="left:1335px;top:802px;width:134px;">0 €</div>
<div class="t r" style="left:1760px;top:802px;width:90px;">N/V</div>
<div class="t num" style="left:106px;top:830px;width:40px;font-weight:700;">4</div>
<div class="t lb " style="left:157px;top:830px;font-weight:700;">Gesamtleistung</div>
<div class="t sg" style="left:415px;top:830px;width:22px;font-weight:700;">=</div>
<div class="t r" style="left:437px;top:830px;width:135px;font-weight:700;">655.477 €</div>
<div class="t r" style="left:588px;top:830px;width:84px;font-weight:700;">100,0 %</div>
<div class="a" style="left:682px;top:837px;width:125px;height:14px;background:#15519d"></div>
<div class="t r" style="left:811px;top:830px;width:135px;font-weight:700;">676.304 €</div>
<div class="a" style="left:1003px;top:837px;width:36px;height:14px;background:#f28f92"></div>
<div class="t r" style="left:962px;top:830px;width:257px;font-weight:700;">-20.827 €</div>
<div class="t r dp" style="left:1225px;top:830px;width:105px;font-weight:700;">-3,1 %</div>
<div class="t r" style="left:1335px;top:830px;width:134px;font-weight:700;">2.499.576 €</div>
<div class="a" style="left:1485px;top:836px;width:75px;height:14px;background:#a2c1e8"></div>
<div class="t r" style="left:1760px;top:830px;width:90px;font-weight:700;">26 %</div>
<div class="t num" style="left:106px;top:858px;width:40px;">5</div>
<div class="t lb lnk" style="left:155px;top:858px;">Material-/Wareneinkauf</div>
<div class="t sg" style="left:415px;top:858px;width:22px;">-</div>
<div class="t r" style="left:437px;top:858px;width:135px;">295.935 €</div>
<div class="t r" style="left:588px;top:858px;width:84px;">45,1 %</div>
<div class="a" style="left:682px;top:865px;width:56px;height:14px;background:#15519d"></div>
<div class="t r" style="left:811px;top:858px;width:135px;">292.415 €</div>
<div class="a" style="left:1040px;top:865px;width:9px;height:14px;background:#f28f92"></div>
<div class="t r" style="left:962px;top:858px;width:257px;">+3.520 €</div>
<div class="t r dp" style="left:1225px;top:858px;width:105px;">+1,2 %</div>
<div class="t r" style="left:1335px;top:858px;width:134px;">1.118.958 €</div>
<div class="a" style="left:1485px;top:864px;width:75px;height:14px;background:#a2c1e8"></div>
<div class="t r" style="left:1760px;top:858px;width:90px;">26 %</div>
<div class="t num" style="left:106px;top:886px;width:40px;font-weight:700;">6</div>
<div class="t lb " style="left:157px;top:886px;font-weight:700;">Rohertrag</div>
<div class="t sg" style="left:415px;top:886px;width:22px;font-weight:700;">=</div>
<div class="t r" style="left:437px;top:886px;width:135px;font-weight:700;">359.542 €</div>
<div class="t r" style="left:588px;top:886px;width:84px;font-weight:700;">54,9 %</div>
<div class="a" style="left:682px;top:893px;width:68px;height:14px;background:#15519d"></div>
<div class="t r" style="left:811px;top:886px;width:135px;font-weight:700;">383.888 €</div>
<div class="a" style="left:997px;top:893px;width:42px;height:14px;background:#f28f92"></div>
<div class="t r" style="left:962px;top:886px;width:257px;font-weight:700;">-24.346 €</div>
<div class="t r dp" style="left:1225px;top:886px;width:105px;font-weight:700;">-6,3 %</div>
<div class="t r" style="left:1335px;top:886px;width:134px;font-weight:700;">1.380.618 €</div>
<div class="a" style="left:1485px;top:892px;width:75px;height:14px;background:#a2c1e8"></div>
<div class="t r" style="left:1760px;top:886px;width:90px;font-weight:700;">26 %</div>
<div class="t num" style="left:106px;top:914px;width:40px;">7</div>
<div class="t lb lnk" style="left:155px;top:914px;">Sonstige betriebl. Erlöse</div>
<div class="t sg" style="left:415px;top:916px;width:22px;">+</div>
<div class="t r" style="left:437px;top:914px;width:135px;">882 €</div>
<div class="t r" style="left:588px;top:914px;width:84px;">0,1 %</div>
<div class="a" style="left:682px;top:921px;width:1px;height:14px;background:#15519d"></div>
<div class="t r" style="left:811px;top:914px;width:135px;">882 €</div>
<div class="t r" style="left:962px;top:914px;width:257px;">0 €</div>
<div class="t r dp" style="left:1225px;top:914px;width:105px;">0 %</div>
<div class="t r" style="left:1335px;top:914px;width:134px;">3.530 €</div>
<div class="a" style="left:1485px;top:920px;width:72px;height:14px;background:#a2c1e8"></div>
<div class="t r" style="left:1760px;top:914px;width:90px;">25 %</div>
<div class="t num" style="left:106px;top:942px;width:40px;font-weight:700;">8</div>
<div class="t lb " style="left:157px;top:942px;font-weight:700;">Betrieblicher Rohertrag</div>
<div class="t sg" style="left:415px;top:942px;width:22px;font-weight:700;">=</div>
<div class="t r" style="left:437px;top:942px;width:135px;font-weight:700;">360.425 €</div>
<div class="t r" style="left:588px;top:942px;width:84px;font-weight:700;">55,0 %</div>
<div class="a" style="left:682px;top:949px;width:68px;height:14px;background:#15519d"></div>
<div class="t r" style="left:811px;top:942px;width:135px;font-weight:700;">384.771 €</div>
<div class="a" style="left:997px;top:949px;width:42px;height:14px;background:#f28f92"></div>
<div class="t r" style="left:962px;top:942px;width:257px;font-weight:700;">-24.346 €</div>
<div class="t r dp" style="left:1225px;top:942px;width:105px;font-weight:700;">-6,3 %</div>
<div class="t r" style="left:1335px;top:942px;width:134px;font-weight:700;">1.384.148 €</div>
<div class="a" style="left:1485px;top:948px;width:75px;height:14px;background:#a2c1e8"></div>
<div class="t r" style="left:1760px;top:942px;width:90px;font-weight:700;">26 %</div>
<div class="t num" style="left:106px;top:970px;width:40px;">9</div>
<div class="t lb lnk" style="left:155px;top:970px;">Personalkosten</div>
<div class="t sg" style="left:415px;top:970px;width:22px;">-</div>
<div class="t r" style="left:437px;top:970px;width:135px;">212.801 €</div>
<div class="t r" style="left:588px;top:970px;width:84px;">32,5 %</div>
<div class="a" style="left:682px;top:977px;width:40px;height:14px;background:#15519d"></div>
<div class="t r" style="left:811px;top:970px;width:135px;">202.911 €</div>
<div class="a" style="left:1040px;top:977px;width:24px;height:14px;background:#f28f92"></div>
<div class="t r" style="left:962px;top:970px;width:257px;">+9.890 €</div>
<div class="t r dp" style="left:1225px;top:970px;width:105px;">+4,9 %</div>
<div class="t r" style="left:1335px;top:970px;width:134px;">773.819 €</div>
<div class="a" style="left:1485px;top:976px;width:81px;height:14px;background:#a2c1e8"></div>
<div class="t r" style="left:1760px;top:970px;width:90px;">28 %</div>
<div class="t num" style="left:113px;top:998px;width:40px;">10</div>
<div class="t lb lnk" style="left:162px;top:998px;">Abschreibungen</div>
<div class="t sg" style="left:415px;top:998px;width:22px;">-</div>
<div class="t r" style="left:437px;top:998px;width:135px;">9.370 €</div>
<div class="t r" style="left:588px;top:998px;width:84px;">1,4 %</div>
<div class="a" style="left:682px;top:1005px;width:1px;height:14px;background:#15519d"></div>
<div class="t r" style="left:811px;top:998px;width:135px;">10.703 €</div>
<div class="a" style="left:1037px;top:1005px;width:2px;height:14px;background:#63d8b2"></div>
<div class="t r" style="left:962px;top:998px;width:257px;">-1.333 €</div>
<div class="t r dp" style="left:1225px;top:998px;width:105px;">-12,5 %</div>
<div class="t r" style="left:1335px;top:998px;width:134px;">43.465 €</div>
<div class="a" style="left:1485px;top:1004px;width:64px;height:14px;background:#a2c1e8"></div>
<div class="t r" style="left:1760px;top:998px;width:90px;">22 %</div>
<div class="t num" style="left:113px;top:1026px;width:40px;">11</div>
<div class="t lb lnk" style="left:162px;top:1026px;">Weitere Kosten</div>
<div class="a" style="left:121px;top:1034px;width:0;height:0;border-left:8px solid #1a5fd6;border-top:6px solid transparent;border-bottom:6px solid transparent"></div>
<div class="t sg" style="left:415px;top:1026px;width:22px;">-</div>
<div class="t r" style="left:437px;top:1026px;width:135px;">87.764 €</div>
<div class="t r" style="left:588px;top:1026px;width:84px;">13,4 %</div>
<div class="a" style="left:682px;top:1033px;width:16px;height:14px;background:#15519d"></div>
<div class="t r" style="left:811px;top:1026px;width:135px;">81.207 €</div>
<div class="a" style="left:1040px;top:1033px;width:16px;height:14px;background:#f28f92"></div>
<div class="t r" style="left:962px;top:1026px;width:257px;">+6.557 €</div>
<div class="t r dp" style="left:1225px;top:1026px;width:105px;">+8,1 %</div>
<div class="t r" style="left:1335px;top:1026px;width:134px;">293.836 €</div>
<div class="a" style="left:1485px;top:1032px;width:87px;height:14px;background:#a2c1e8"></div>
<div class="t r" style="left:1760px;top:1026px;width:90px;">30 %</div>
<div class="t num" style="left:112px;top:1054px;width:40px;font-weight:700;">12</div>
<div class="t lb " style="left:164px;top:1054px;font-weight:700;">Gesamtkosten</div>
<div class="t sg" style="left:415px;top:1054px;width:22px;font-weight:700;">=</div>
<div class="t r" style="left:437px;top:1054px;width:135px;font-weight:700;">309.935 €</div>
<div class="t r" style="left:588px;top:1054px;width:84px;font-weight:700;">47,3 %</div>
<div class="a" style="left:682px;top:1061px;width:59px;height:14px;background:#15519d"></div>
<div class="t r" style="left:811px;top:1054px;width:135px;font-weight:700;">294.822 €</div>
<div class="a" style="left:1040px;top:1061px;width:36px;height:14px;background:#f28f92"></div>
<div class="t r" style="left:962px;top:1054px;width:257px;font-weight:700;">+15.114 €</div>
<div class="t r dp" style="left:1225px;top:1054px;width:105px;font-weight:700;">+5,1 %</div>
<div class="t r" style="left:1335px;top:1054px;width:134px;font-weight:700;">1.111.120 €</div>
<div class="a" style="left:1485px;top:1060px;width:81px;height:14px;background:#a2c1e8"></div>
<div class="t r" style="left:1760px;top:1054px;width:90px;font-weight:700;">28 %</div>
<div class="a" style="left:1556px;top:410px;width:2px;height:672px;background:repeating-linear-gradient(#0d4a9e 0 5px, transparent 5px 8px)"></div>

<!-- column dividers -->
<div class="a" style="left:415px;top:318px;width:1px;height:759px;background:#e3e5ea"></div>
<div class="a" style="left:437px;top:318px;width:1px;height:759px;background:#e3e5ea"></div>
<div class="a" style="left:587px;top:356px;width:1px;height:721px;background:#e3e5ea"></div>
<div class="a" style="left:811px;top:259px;width:1px;height:818px;background:#e3e5ea"></div>
<div class="a" style="left:961px;top:356px;width:1px;height:721px;background:#e3e5ea"></div>
<div class="a" style="left:1334px;top:318px;width:1px;height:759px;background:#e3e5ea"></div>
<div class="a" style="left:1484px;top:356px;width:1px;height:721px;background:#e3e5ea"></div>
<div class="a" style="left:681px;top:410px;width:1px;height:667px;background:#e3e5ea"></div>

<!-- FEEDBACK -->
<div class="a" style="left:1865px;top:484px;width:40px;height:109px;background:#1e68d9;border-radius:4px 0 0 4px"></div>
<div class="a" style="left:1866px;top:494px;width:36px;height:62px;color:#fff;font-size:12.5px;writing-mode:vertical-rl;transform:rotate(180deg);line-height:36px;text-align:center;letter-spacing:0.4px">Feedback</div>
<svg class="a" style="position:absolute;left:1872px;top:561px" width="24" height="20" viewBox="0 0 24 20">
<path d="M1.8 2.4 H20.5 Q22 2.4 22 4 V15.5 Q22 17 20.5 17 H5.8 Q4.2 17 4.2 15.5 V5.3 Z" fill="#fff"/>
<circle cx="9.5" cy="8.2" r="0.9" fill="#1c64d8"/><circle cx="16.6" cy="8.2" r="0.9" fill="#1c64d8"/>
<path d="M10 11 H16 Q15.5 14 13 14 Q10.5 14 10 11 Z" fill="#1c64d8"/>
</svg>
</body></html>
